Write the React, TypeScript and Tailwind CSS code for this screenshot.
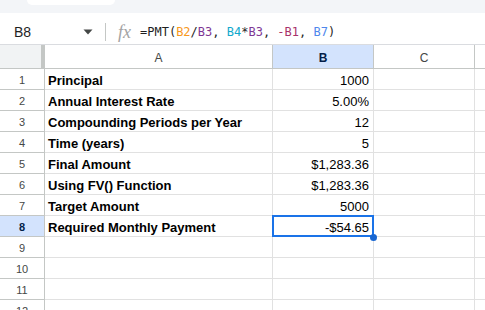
import React from "react";

const rows: { label: string; value: string }[] = [
  { label: "Principal", value: "1000" },
  { label: "Annual Interest Rate", value: "5.00%" },
  { label: "Compounding Periods per Year", value: "12" },
  { label: "Time (years)", value: "5" },
  { label: "Final Amount", value: "$1,283.36" },
  { label: "Using FV() Function", value: "$1,283.36" },
  { label: "Target Amount", value: "5000" },
  { label: "Required Monthly Payment", value: "-$54.65" },
  { label: "", value: "" },
  { label: "", value: "" },
  { label: "", value: "" },
  { label: "", value: "" },
];

export default function App() {
  return (
    <div
      className="w-[485px] h-[310px] overflow-hidden bg-white relative"
      style={{ fontFamily: '"Liberation Sans", Arial, sans-serif' }}
    >
      {/* top strip */}
      <div className="h-[13px] bg-[#f3f5f8] relative">
        <div className="absolute left-[27px] top-0 w-[88px] h-[5px] bg-white rounded-b-[6px]" />
      </div>
      {/* formula bar */}
      <div className="h-[32px] flex items-center pt-[6px] border-b border-[#dadce0]">
        <div className="w-[105px] flex items-center pl-[14px] pr-[12px] h-full">
          <span className="text-[14px] leading-[16px] text-[#1f1f1f] flex-1">B8</span>
          <svg width="10" height="6" viewBox="0 0 10 6">
            <path d="M0.5 0.5 L9.5 0.5 L5 5.5 Z" fill="#444746" />
          </svg>
        </div>
        <div className="w-px h-[18px] bg-[#c4c7c5]" />
        <span
          className="ml-[12px] text-[18px] italic text-[#a3a3a3] leading-none"
          style={{ fontFamily: '"Liberation Serif", serif' }}
        >
          fx
        </span>
        <span
          className="ml-[9px] text-[12px] leading-[16px] text-[#1f1f1f] whitespace-pre"
          style={{ fontFamily: '"DejaVu Sans Mono", monospace' }}
        >
          =PMT(<span className="text-[#f7981d]">B2</span>/<span className="text-[#7e3794]">B3</span>,{" "}
          <span className="text-[#11a9cc]">B4</span>*<span className="text-[#7e3794]">B3</span>,{" "}
          <span className="text-[#a8326b]">-B1</span>, <span className="text-[#4f87ec]">B7</span>)
        </span>
      </div>
      {/* column headers */}
      <div className="flex h-[24px] border-b border-[#c4c7c5] text-[12px] text-[#444746]">
        <div className="w-[45px] bg-[#f1f3f4] border-r-[4px] border-[#c4c7c5]" />
        <div className="w-[228px] flex items-center justify-center pt-[2px] border-r border-[#c4c7c5]">A</div>
        <div className="w-[101px] flex items-center justify-center pt-[2px] border-r border-[#c4c7c5] bg-[#d3e3fd] text-[#041e49] font-bold">
          B
        </div>
        <div className="w-[101px] flex items-center justify-center pt-[2px] border-r border-[#c4c7c5]">C</div>
        <div className="flex-1" />
      </div>
      {/* rows */}
      {rows.map((r, i) => {
        const selected = i === 7;
        return (
          <div key={i} className="flex h-[21px]">
            <div
              className={
                selected
                  ? "w-[45px] flex items-end justify-center pb-[2px] leading-[13px] border-r border-b border-[#c4c7c5] bg-[#d3e3fd] text-[11px] font-bold text-[#041e49]"
                  : "w-[45px] flex items-end justify-center pb-[2px] leading-[13px] border-r border-b border-[#c4c7c5] text-[11px] text-[#444746]"
              }
            >
              {i + 1}
            </div>
            <div className="w-[228px] flex items-end pb-[1px] leading-[15px] pl-[3px] border-r border-b border-[#e1e1e1] text-[13px] font-bold text-black whitespace-nowrap">
              {r.label}
            </div>
            <div className="w-[101px] relative flex items-end pb-[1px] leading-[15px] justify-end pr-[4px] border-r border-b border-[#e1e1e1] text-[13px] text-black">
              {r.value}
              {selected && (
                <>
                  <div className="absolute left-[-1px] top-[-1px] w-[102px] h-[22px] border-2 border-[#1a73e8]" />
                  <div className="absolute right-[-4px] bottom-[-5px] w-[7px] h-[7px] rounded-full bg-[#1967d2] z-10" />
                </>
              )}
            </div>
            <div className="w-[101px] border-r border-b border-[#e1e1e1]" />
            <div className="flex-1 border-b border-[#e1e1e1]" />
          </div>
        );
      })}
    </div>
  );
}
